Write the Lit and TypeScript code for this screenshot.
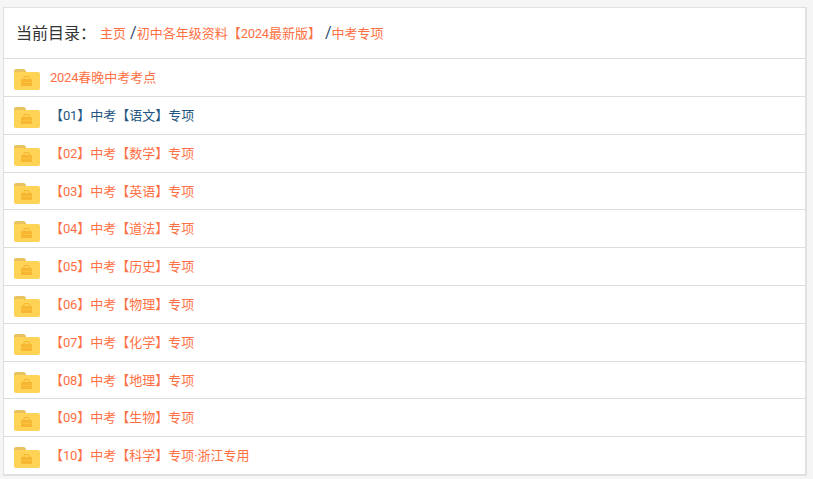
import { LitElement, html, css } from "lit";
import { customElement } from "lit/decorators.js";

const rows: { t: string; dark?: boolean }[] = [
  { t: "2024春晚中考考点" },
  { t: "【01】中考【语文】专项", dark: true },
  { t: "【02】中考【数学】专项" },
  { t: "【03】中考【英语】专项" },
  { t: "【04】中考【道法】专项" },
  { t: "【05】中考【历史】专项" },
  { t: "【06】中考【物理】专项" },
  { t: "【07】中考【化学】专项" },
  { t: "【08】中考【地理】专项" },
  { t: "【09】中考【生物】专项" },
  { t: "【10】中考【科学】专项·浙江专用" },
];

const digits = (s: string) =>
  s.split(/(\d+)/).map((p) => (/^\d+$/.test(p) ? html`<span class="num">${p}</span>` : p));

@customElement("app-root")
export class AppRoot extends LitElement {
  static styles = css`
    :host {
      display: block;
      height: 479px;
      background: #f5f5f5;
      padding: 7px 6px 0 3px;
      box-sizing: border-box;
      font-family: Roboto, "Noto Sans CJK SC", sans-serif;
      overflow: hidden;
    }
    .card {
      background: #fff;
      border: 1px solid #e0e0e0;
      border-bottom-width: 2px;
      border-right-width: 2px;
    }
    .head {
      height: 51.2px;
      box-sizing: border-box;
      display: flex;
      align-items: center;
      padding-left: 12px;
      font-size: 13px;
      color: #ff7043;
      white-space: pre;
      border-bottom: 1px solid #ddd;
    }
    .label {
      font-size: 16px;
      color: #333;
      width: 84px;
    }
    .sep {
      color: #2a4a6a;
      font-size: 16px;
      margin-left: 4px;
    }
    .num {
      letter-spacing: -0.25px;
    }
    .row {
      height: 37.8px;
      box-sizing: border-box;
      display: flex;
      align-items: center;
      padding-left: 10px;
      gap: 10px;
      font-size: 13px;
      color: #ff7043;
      border-bottom: 1px solid #ddd;
    }
    .row:last-child {
      border-bottom: 0;
      height: 36.8px;
    }
    .row.dark {
      color: #1f5580;
    }
    .text {
      margin-bottom: 1.7px;
    }
    svg {
      width: 26px;
      height: 21px;
      flex: none;
      display: block;
      margin-top: 4.6px;
    }
  `;

  private folder() {
    return html`<svg viewBox="0 0 26 21">
      <path d="M0 2a2 2 0 0 1 2-2h7a3 3 0 0 1 3 3v1H0z" fill="#e8c25e" />
      <path d="M0 4a1 1 0 0 1 1-1h23a2 2 0 0 1 2 2v14a2 2 0 0 1-2 2H2a2 2 0 0 1-2-2z" fill="#ffd355" />
      <path d="M10 10V8.5a1 1 0 0 1 1-1h3a1 1 0 0 1 1 1V10" fill="none" stroke="#f7b733" stroke-width="1.2" />
      <rect x="7" y="10" width="11" height="7" rx="0.5" fill="#f7b733" />
      <rect x="7" y="13" width="11" height="0.8" fill="#fbc443" />
    </svg>`;
  }

  render() {
    return html`<div class="card">
      <div class="head">
        <span class="label text">当前目录：</span><span class="text">主页</span><span class="sep text">/</span><span class="text">${digits("初中各年级资料【2024最新版】")}</span><span class="sep text">/</span><span class="text">中考专项</span>
      </div>
      ${rows.map(
        (r) => html`<div class="row ${r.dark ? "dark" : ""}">${this.folder()}<span class="text">${digits(r.t)}</span></div>`
      )}
    </div>`;
  }
}
